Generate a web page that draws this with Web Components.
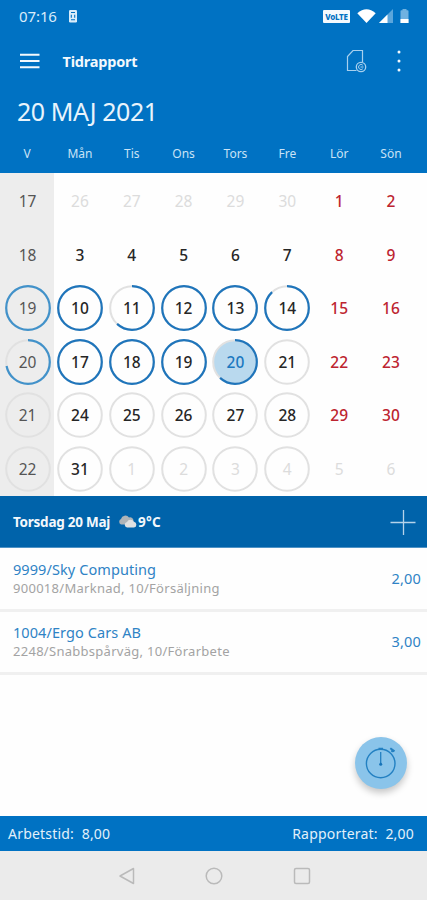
<!DOCTYPE html>
<html lang="sv">
<head>
<meta charset="utf-8">
<title>Tidrapport</title>
<style>
    body {
        margin: 0;
        background: #fefefe;
        font-family: "Noto Sans", "Open Sans", sans-serif;
    }
</style>
</head>
<body>
<time-app></time-app>

<script>
class StatusBar extends HTMLElement {
    connectedCallback() {
        this.attachShadow({ mode: 'open' });
        this.shadowRoot.innerHTML = `
            <style>
                :host {
                    display: flex;
                    align-items: center;
                    height: 32px;
                    padding: 0 18px 0 19px;
                    color: #d9ecfa;
                    font-size: 15px;
                    letter-spacing: -0.1px;
                }
                .phone { margin-left: 12px; }
                .volte {
                    margin-left: auto;
                    width: 27px;
                    height: 13px;
                    line-height: 13px;
                    border-radius: 1px;
                    background: #f4f9fd;
                    color: #0071c2;
                    font-size: 8px;
                    font-weight: 800;
                    letter-spacing: -0.3px;
                    text-align: center;
                }
                svg { display: block; }
            </style>
            <span>07:16</span>
            <svg class="phone" width="8" height="13" viewBox="0 0 8 13">
                <rect width="8" height="12.5" rx="1.2" fill="#d9ecfa"/>
                <path d="M2 2.500h4M2 9.800h4M2.300 4.800v3M5.700 4.800v3" stroke="#0071c2" stroke-width="1.1"/>
            </svg>
            <span class="volte">VoLTE</span>
            <svg style="margin-left:7px" width="19" height="14" viewBox="0 0 19 14">
                <path d="M0.3 4.2Q9.5-3.6 18.7 4.2L9.5 14Z" fill="#fff"/>
            </svg>
            <svg style="margin-left:3px" width="14" height="14" viewBox="0 0 14 14">
                <path d="M14 0V14H0Z" fill="#5ba6dc"/>
                <path d="M8.5 5.5V14H0Z" fill="#fff"/>
            </svg>
            <svg style="margin-left:7px" width="9" height="14" viewBox="0 0 9 14">
                <path d="M0.5 2Q0.5 1.3 1.5 1.3H2.5V0H6.5V1.3H7.5Q8.5 1.3 8.5 2V14H0.5Z" fill="#70b2e1"/>
                <path d="M.5 10h8v4h-8z" fill="#fff"/>
            </svg>
        `;
    }
}
customElements.define('status-bar', StatusBar);

class AppBar extends HTMLElement {
    connectedCallback() {
        this.attachShadow({ mode: 'open' });
        this.shadowRoot.innerHTML = `
            <style>
                :host {
                    display: flex;
                    align-items: center;
                    height: 58px;
                    padding: 0 26.5px 0 20px;
                    color: #f3f9fd;
                }
                .title {
                    margin-left: 22.5px;
                    font-size: 14.5px;
                    font-weight: 700;
                    letter-spacing: -0.2px;
                }
                .doc { margin-left: auto; }
                .dots { margin-left: 30px; }
                svg { display: block; }
            </style>
            <svg width="20" height="16" viewBox="0 0 20 16">
                <path d="M0 1.7h19.5M0 8h19.5M0 14.3h19.5" stroke="#f3f9fd" stroke-width="2"/>
            </svg>
            <span class="title"><slot></slot></span>
            <svg class="doc" width="21" height="24" viewBox="0 0 21 24" fill="none" stroke="#a7d0ee">
                <path d="M10.5 21.5H1.5V7.5L7 1.5H16.5V13" stroke-width="1.2"/>
                <circle cx="15" cy="18" r="4.7" stroke-width="1.3"/>
                <path d="M16.800 16.200A2.500 2.500 0 1 0 16.800 19.800M14.500 18H17.500" stroke-width="1"/>
            </svg>
            <svg class="dots" width="4" height="22" viewBox="0 0 4 22" fill="#f3f9fd">
                <circle cx="2" cy="2" r="1.5"/>
                <circle cx="2" cy="11" r="1.5"/>
                <circle cx="2" cy="20" r="1.5"/>
            </svg>
        `;
    }
}
customElements.define('app-bar', AppBar);

// One calendar day (or week number). The ring attribute holds the percentage reported.
class DayCell extends HTMLElement {
    connectedCallback() {
        const ring = this.getAttribute('ring');
        const selected = this.hasAttribute('selected');
        let svg = '';
        if (ring !== null) {
            svg = `<svg width="46" height="46" viewBox="0 0 46 46">
                <circle cx="23" cy="23" r="21.8" class="track"/>
                ${+ring > 0 ? `<circle cx="23" cy="23" r="21.8" class="done" pathLength="100"
                    stroke-dasharray="${ring} ${100 - ring}" transform="rotate(-90 23 23)"/>` : ''}
            </svg>`;
        }
        this.attachShadow({ mode: 'open' });
        this.shadowRoot.innerHTML = `
            <style>
                :host {
                    display: grid;
                    place-items: center;
                    height: 53.5px;
                    font-size: 15.5px;
                    font-weight: 500;
                    color: #262626;
                }
                :host([kind="other"]) { color: #dcdcdc; font-weight: 400; }
                :host([kind="weekend"]) { color: #bd2430; }
                :host([kind="week"]) { color: #555; font-weight: 400; padding-left: 1px; }
                :host([selected]) { color: #1c78c0; }
                svg, span { grid-area: 1 / 1; }
                svg { fill: none; }
                .track { stroke: #e1e1e1; stroke-width: 2; fill: ${selected ? '#b9d9ee' : 'none'}; }
                .done { stroke: #1f75bb; stroke-width: 2.2; }
                :host([kind="week"]) .done { stroke: #4292ca; }
            </style>
            ${svg}
            <span><slot></slot></span>
        `;
    }
}
customElements.define('day-cell', DayCell);

const weeks = [
    { nr: 17, days: [26, 27, 28, 29, 30, 1, 2], other: [0, 1, 2, 3, 4] },
    { nr: 18, days: [3, 4, 5, 6, 7, 8, 9] },
    { nr: 19, ring: 100, days: [10, 11, 12, 13, 14, 15, 16], rings: [100, 62, 100, 100, 88] },
    { nr: 20, ring: 72, days: [17, 18, 19, 20, 21, 22, 23], rings: [100, 100, 100, 62, 0], selected: 3 },
    { nr: 21, ring: 0, days: [24, 25, 26, 27, 28, 29, 30], rings: [0, 0, 0, 0, 0] },
    { nr: 22, ring: 0, days: [31, 1, 2, 3, 4, 5, 6], rings: [0, 0, 0, 0, 0], other: [1, 2, 3, 4, 5, 6] }
];

class MonthCalendar extends HTMLElement {
    connectedCallback() {
        const rows = weeks.map(w => {
            const cells = w.days.map((d, i) => {
                let kind = i > 4 ? 'weekend' : 'day';
                if (w.other && w.other.includes(i)) kind = 'other';
                const ring = w.rings && i < 5 ? `ring="${w.rings[i]}"` : '';
                return `<day-cell kind="${kind}" ${ring} ${w.selected === i ? 'selected' : ''}>${d}</day-cell>`;
            }).join('');
            return `<day-cell kind="week" ${w.ring !== undefined ? `ring="${w.ring}"` : ''}>${w.nr}</day-cell>${cells}`;
        }).join('');
        this.attachShadow({ mode: 'open' });
        this.shadowRoot.innerHTML = `
            <style>
                :host { display: block; }
                .grid {
                    display: grid;
                    grid-template-columns: 54px repeat(7, 51.85px);
                }
                .head {
                    height: 39px;
                    align-items: center;
                    justify-items: center;
                    background: #0072c3;
                    color: #c9e3f6;
                    font-size: 12px;
                }
                .body {
                    box-sizing: border-box;
                    height: 323px;
                    padding-top: 1.5px;
                    align-content: start;
                    background: linear-gradient(90deg, #ededed 54px, #fefefe 54px);
                }
            </style>
            <div class="grid head">
                <span>V</span><span>Mån</span><span>Tis</span><span>Ons</span>
                <span>Tors</span><span>Fre</span><span>Lör</span><span>Sön</span>
            </div>
            <div class="grid body">${rows}</div>
        `;
    }
}
customElements.define('month-calendar', MonthCalendar);

class DayBar extends HTMLElement {
    connectedCallback() {
        this.attachShadow({ mode: 'open' });
        this.shadowRoot.innerHTML = `
            <style>
                :host {
                    display: flex;
                    align-items: center;
                    height: 52px;
                    padding: 0 11px 0 13px;
                    box-sizing: border-box;
                    background: #0063aa;
                    border-bottom: 1px solid #4f93c6;
                    color: #f3f8fc;
                    font-size: 13.5px;
                    font-weight: 700;
                    letter-spacing: -0.25px;
                }
                .cloud { margin: 0 1px 0 8px; }
                .temp { letter-spacing: 0.2px; }
                .plus { margin-left: auto; }
                svg { display: block; }
            </style>
            <span><slot></slot></span>
            <svg class="cloud" width="19" height="13" viewBox="0 0 19 13">
                <path d="M3 9.5a3 3 0 0 1 0-5.5A4.5 4.5 0 0 1 11 2.5A3.5 3.5 0 0 1 15.5 6L12 9.5Z" fill="#aeb4b8"/>
                <path d="M9 12.5a2.8 2.8 0 0 1 0-5.5A4 4 0 0 1 16 6.8A2.9 2.9 0 0 1 16 12.5Z" fill="#dfe1e2"/>
            </svg>
            <span class="temp"><slot name="temp"></slot></span>
            <svg class="plus" width="26" height="26" viewBox="0 0 26 26">
                <path d="M.5 13.5h25M13.5 1v25" stroke="#b5d3ea" stroke-width="1.3"/>
            </svg>
        `;
    }
}
customElements.define('day-bar', DayBar);

class TimeEntry extends HTMLElement {
    connectedCallback() {
        this.attachShadow({ mode: 'open' });
        this.shadowRoot.innerHTML = `
            <style>
                :host {
                    display: flex;
                    align-items: center;
                    justify-content: space-between;
                    height: 63.5px;
                    padding: 0 6px 1px 13px;
                    box-sizing: border-box;
                    border-bottom: 3px solid #f0f0f0;
                    color: #2f83c5;
                    font-size: 14.5px;
                    letter-spacing: 0.08px;
                }
                .name { line-height: 20px; }
                .info {
                    line-height: 18px;
                    color: #a3a3a3;
                    font-size: 13px;
                    letter-spacing: 0.28px;
                }
                .hours { font-size: 14.5px; letter-spacing: 0.2px; }
            </style>
            <div>
                <div class="name"><slot></slot></div>
                <div class="info"><slot name="info"></slot></div>
            </div>
            <span class="hours"><slot name="hours"></slot></span>
        `;
    }
}
customElements.define('time-entry', TimeEntry);

class TimerButton extends HTMLElement {
    connectedCallback() {
        this.attachShadow({ mode: 'open' });
        this.shadowRoot.innerHTML = `
            <style>
                :host {
                    display: block;
                    width: 52px;
                    height: 52px;
                    border-radius: 50%;
                    background: #8ac4ea;
                    box-shadow: 0 4px 7px rgba(0, 0, 0, 0.22);
                }
                svg { display: block; }
            </style>
            <svg width="52" height="52" viewBox="0 0 52 52" fill="none" stroke="#2380c2">
                <circle cx="25.7" cy="26.5" r="14.3" stroke-width="1.4"/>
                <path d="M25.7 15V27" stroke-width="1.3"/>
                <path d="M23.5 11.7h4.5M35.3 11.2l4.2 3.2M36.5 14.8l1.5-1.8" stroke-width="2"/>
                <circle cx="25.7" cy="27.3" r="1.5" fill="#1773b8" stroke="none"/>
            </svg>
        `;
    }
}
customElements.define('timer-button', TimerButton);

class TotalsBar extends HTMLElement {
    connectedCallback() {
        this.attachShadow({ mode: 'open' });
        this.shadowRoot.innerHTML = `
            <style>
                :host {
                    display: flex;
                    align-items: center;
                    justify-content: space-between;
                    height: 35px;
                    padding: 0 13px 0 8px;
                    background: #0072c3;
                    color: #e2f0fa;
                    font-size: 14px;
                    letter-spacing: 0.2px;
                    white-space: pre;
                }
            </style>
            <slot></slot>
        `;
    }
}
customElements.define('totals-bar', TotalsBar);

class NavBar extends HTMLElement {
    connectedCallback() {
        this.attachShadow({ mode: 'open' });
        this.shadowRoot.innerHTML = `
            <style>
                :host {
                    display: flex;
                    align-items: center;
                    justify-content: center;
                    gap: 70px;
                    height: 49px;
                    background: #ebebeb;
                }
                svg { display: block; }
            </style>
            <svg width="18" height="18" viewBox="0 0 18 18" fill="none" stroke="#bababa" stroke-width="1.5">
                <path d="M16.5 1.5V16.5L3 9Z" stroke-linejoin="round"/>
            </svg>
            <svg width="18" height="18" viewBox="0 0 18 18" fill="none" stroke="#bababa" stroke-width="1.5">
                <circle cx="9" cy="9" r="7.8"/>
            </svg>
            <svg width="18" height="18" viewBox="0 0 18 18" fill="none" stroke="#bababa" stroke-width="1.5">
                <rect x="1.500" y="1.500" width="15" height="15" rx="1.500"/>
            </svg>
        `;
    }
}
customElements.define('nav-bar', NavBar);

class TimeApp extends HTMLElement {
    connectedCallback() {
        this.attachShadow({ mode: 'open' });
        this.shadowRoot.innerHTML = `
            <style>
                :host {
                    position: relative;
                    display: flex;
                    flex-direction: column;
                    width: 427px;
                    height: 900px;
                    overflow: hidden;
                }
                header { background: #0072c3; }
                .date {
                    height: 44px;
                    line-height: 43px;
                    padding-left: 17px;
                    color: #e8f4fc;
                    font-size: 25px;
                    letter-spacing: -0.45px;
                }
                main { flex: 1; }
                timer-button {
                    position: absolute;
                    right: 20px;
                    bottom: 111px;
                }
            </style>
            <header>
                <status-bar></status-bar>
                <app-bar>Tidrapport</app-bar>
                <div class="date">20 MAJ 2021</div>
            </header>
            <month-calendar></month-calendar>
            <day-bar>Torsdag 20 Maj<span slot="temp">9°C</span></day-bar>
            <main>
                <time-entry>9999/Sky Computing
                    <span slot="info">900018/Marknad, 10/Försäljning</span>
                    <span slot="hours">2,00</span>
                </time-entry>
                <time-entry>1004/Ergo Cars AB
                    <span slot="info">2248/Snabbspårväg, 10/Förarbete</span>
                    <span slot="hours">3,00</span>
                </time-entry>
            </main>
            <totals-bar><span>Arbetstid:  8,00</span><span>Rapporterat:  2,00</span></totals-bar>
            <nav-bar></nav-bar>
            <timer-button></timer-button>
        `;
    }
}
customElements.define('time-app', TimeApp);
</script>
</body>
</html>
